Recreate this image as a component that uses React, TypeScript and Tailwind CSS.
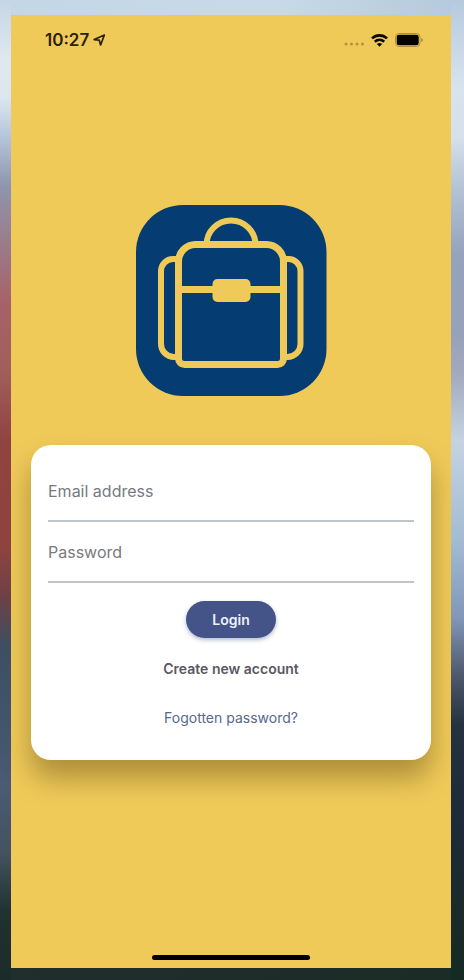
import { useState } from "react";
import type { FormEvent, InputHTMLAttributes } from "react";

function StatusBar() {
  return (
    <header className="flex h-[50px] items-center justify-between pl-[34px] pr-7 text-[#2a220e]">
      <div className="flex items-center gap-1">
        <span className="text-[17px] leading-5 font-semibold">10:27</span>
        <svg className="h-3 w-3" viewBox="0 0 12 12" fill="none" stroke="currentColor" strokeWidth="1.7" strokeLinejoin="round" aria-hidden="true">
          <path d="M11.4 1 1.2 5.6 6.2 6.1 7.6 11Z" />
        </svg>
      </div>
      <div className="flex items-center gap-[7px]">
        <svg className="mt-2 h-1 w-[21px]" viewBox="0 0 21 4" fill="#b3913b" aria-hidden="true">
          <circle cx="3" cy="2" r="1.5" />
          <circle cx="8.5" cy="2" r="1.5" />
          <circle cx="14" cy="2" r="1.5" />
          <circle cx="19.5" cy="2" r="1.5" />
        </svg>
        <svg className="h-[13px] w-[17px]" viewBox="0 0 17 13" fill="none" stroke="#0b0903" strokeWidth="2.6" aria-hidden="true">
          <path d="M1 4.4C5.3.3 11.7.3 16 4.4" />
          <path d="M3.8 7.8C6.5 5.2 10.5 5.2 13.2 7.8" />
          <path d="M8.5 12.8 5.9 10c1.5-1.4 3.7-1.4 5.2 0Z" fill="#0b0903" stroke="none" />
        </svg>
        <svg className="h-[14px] w-7" viewBox="0 0 28 14" aria-hidden="true">
          <rect x=".5" y=".5" width="24.5" height="13" rx="3.6" fill="none" stroke="#b3913b" />
          <rect x="1.7" y="1.7" width="22" height="10.6" rx="2.2" fill="#050401" />
          <path d="M26.3 5v4q1.4-.7 1.4-2T26.3 5Z" fill="#9a7d34" />
        </svg>
      </div>
    </header>
  );
}

function BackpackLogo() {
  return (
    <svg className="h-[191px] w-[191px]" viewBox="0 0 191 191" fill="none" stroke="#f0ca59" strokeWidth="7" role="img" aria-label="Backpack">
      <rect width="190.5" height="191" rx="47" fill="#053c71" stroke="none" />
      <path d="M70.5 40A24.500 24.500 0 0 1 119.500 40" strokeWidth="6" />
      <path d="M59.500 39.500H130.500A17 17 0 0 1 147.500 56.500V153.500A6 6 0 0 1 141.500 159.500H48.500A6 6 0 0 1 42.500 153.500V56.500A17 17 0 0 1 59.500 39.500Z" />
      <path d="M43 54H37A12 12 0 0 0 25 66V139A13 13 0 0 0 38 152H43M147 54H152.500A12 12 0 0 1 164.500 66V139A13 13 0 0 1 151.500 152H147" strokeWidth="6" />
      <path d="M43 84.500H147" />
      <rect x="76.500" y="74" width="38" height="23" rx="5" fill="#f0ca59" stroke="none" />
    </svg>
  );
}

type FieldProps = InputHTMLAttributes<HTMLInputElement> & { id: string; label: string };

function Field({ id, label, ...rest }: FieldProps) {
  return (
    <div className="grid items-center border-b-2 border-[#c0c5c9] text-base leading-6">
      <input
        id={id}
        placeholder=" "
        className="peer col-start-1 row-start-1 block h-[59px] w-full bg-transparent text-[#333] outline-none"
        {...rest}
      />
      <label
        htmlFor={id}
        className="invisible col-start-1 row-start-1 cursor-text text-[#777a7e] peer-placeholder-shown:visible"
      >
        {label}
      </label>
    </div>
  );
}

function LoginCard() {
  const [email, setEmail] = useState("");
  const [password, setPassword] = useState("");
  const submit = (event: FormEvent) => event.preventDefault();

  return (
    <form
      onSubmit={submit}
      className="mx-5 flex flex-col rounded-[20px] bg-white px-[17px] pt-4 pb-8 shadow-[0_18px_28px_rgba(70,55,10,0.4)]"
    >
      <Field id="email" label="Email address" type="email" value={email} onChange={(e) => setEmail(e.target.value)} />
      <Field id="password" label="Password" type="password" value={password} onChange={(e) => setPassword(e.target.value)} />
      <div className="mt-[18px] flex flex-col items-center">
        <button type="submit" className="h-[37px] w-[90px] rounded-full bg-[#445489] text-sm font-semibold text-[#eef1f8] shadow-[0_2px_4px_rgba(40,60,110,0.35)]">
          Login
        </button>
        <a href="#create" className="mt-[21px] text-sm leading-5 font-semibold text-[#5b575f]">Create new account</a>
        <a href="#reset" className="mt-[29px] text-sm leading-5 text-[#56688a]">Fogotten password?</a>
      </div>
    </form>
  );
}

export default function App() {
  return (
    <div className="flex min-h-screen font-['Inter','Liberation_Sans',sans-serif]">
      <div className="w-[11px] shrink-0 bg-[linear-gradient(to_bottom,#c5d6e6_0%,#dfe8f0_6%,#dce6ef_10%,#b4c5da_14%,#8e95ae_19%,#9b7b8a_25%,#a66266_31%,#a05e5b_38%,#8f4440_45%,#8f4440_56%,#6d4248_61%,#3f5064_66%,#43566c_74%,#4a5b74_80%,#44535f_87%,#203231_93%,#1b2b29_100%)]" />
      <div className="flex min-w-0 flex-1 flex-col">
        <div className="h-[15px] shrink-0 bg-[linear-gradient(to_right,#c5d6e6,#c9d9e8_60%,#b5cadd)]" />
        <main className="flex flex-1 flex-col bg-[#f0ca59]">
          <StatusBar />
          <div className="mt-[140px] mb-[49px] flex justify-center">
            <BackpackLogo />
          </div>
          <LoginCard />
          <div className="mt-auto flex justify-center pb-2">
            <div className="h-[5px] w-[158px] rounded-full bg-black" />
          </div>
        </main>
        <div className="h-3 shrink-0 bg-[linear-gradient(to_right,#202e2e,#1b2b25)]" />
      </div>
      <div className="w-[13px] shrink-0 bg-[linear-gradient(to_bottom,#b5cade_0%,#d8e3ee_9%,#d5e0ea_14%,#b4c5d6_19%,#94a3be_26%,#95a2bb_34%,#a3a9bd_38%,#c4d3e1_45%,#a3bcd4_55%,#8297b9_63%,#4d586c_69%,#25323f_74%,#1b2b3a_84%,#192b2b_92%,#162a24_100%)]" />
    </div>
  );
}
